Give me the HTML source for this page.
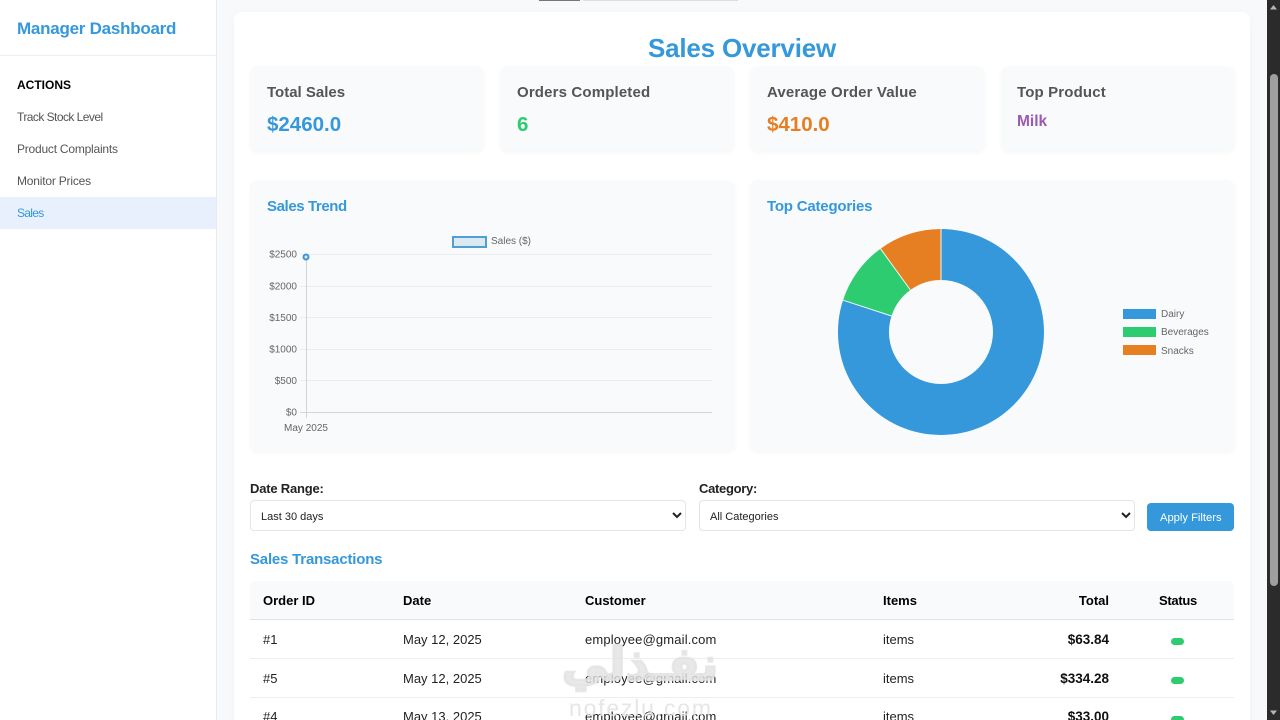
<!DOCTYPE html>
<html><head><meta charset="utf-8"><title>Sales Overview</title>
<style>
html,body{margin:0;padding:0;width:1280px;height:720px;overflow:hidden;background:#f8f9fb;font-family:"Liberation Sans",sans-serif}
*{box-sizing:border-box}
#root{position:absolute;left:0;top:0;width:1280px;height:720px;overflow:hidden;background:#f8f9fb;filter:blur(.3px)}
.t{position:absolute;white-space:nowrap;line-height:20px;height:20px}
.b{position:absolute}
.card{position:absolute;background:#f9fafc;border-radius:8px;box-shadow:0 2px 4px rgba(0,0,0,.04)}
.m{font-size:12px;color:#555}
.ct{font-size:15px;font-weight:bold;color:#555;letter-spacing:.15px}
.v{font-size:20.5px;font-weight:bold}
.h3{font-size:15px;font-weight:bold;color:#3498db}
.th{font-size:13px;font-weight:bold;color:#000}
.td{font-size:13px;color:#222}
.tot{font-size:13.5px;font-weight:bold;color:#111}
.tick{font:10px "Liberation Sans",sans-serif;fill:#666}
.l{font-size:13px;font-weight:bold;color:#222}
select{position:absolute;background:#fff;border:1px solid #e2e4e8;border-radius:4px;font:11px "Liberation Sans",sans-serif;color:#222;padding:2px 6px 0;height:31px;width:436px;top:500px}
.pill{position:absolute;left:1171px;width:13px;height:7px;border-radius:4px;background:#2ecc71}
.line{position:absolute;left:250px;width:984px;height:1px;background:#eceef0}
</style></head><body>
<div id="root">

<div class="b" style="left:0;top:0;width:217px;height:720px;background:#fff;border-right:1px solid #e8eaed"></div>
<div class="b" style="left:0;top:55px;width:216px;height:1px;background:#eceef0"></div>
<div class="t" style="left:17px;top:19px;font-size:17px;letter-spacing:-.25px;font-weight:bold;color:#3498db">Manager Dashboard</div>
<div class="t" style="left:17px;top:75px;font-size:12px;font-weight:bold;color:#000">ACTIONS</div>
<div class="t m" style="left:17px;top:107px;letter-spacing:-.55px">Track Stock Level</div>
<div class="t m" style="left:17px;top:139px;letter-spacing:-.22px">Product Complaints</div>
<div class="t m" style="left:17px;top:171px;letter-spacing:-.2px">Monitor Prices</div>
<div class="b" style="left:0;top:197px;width:216px;height:32px;background:#e8f0fe"></div>
<div class="t m" style="left:17px;top:203px;color:#3498db;letter-spacing:-.7px">Sales</div>

<div class="b" style="left:539px;top:0;width:41px;height:1px;background:#777"></div>
<div class="b" style="left:583px;top:0;width:155px;height:1px;background:#ddd"></div>

<div class="b" style="left:234px;top:12px;width:1016px;height:720px;background:#fff;border-radius:8px;box-shadow:0 2px 8px rgba(0,0,0,.03)"></div>

<div class="t" style="left:648px;top:33px;height:30px;line-height:30px;font-size:26px;letter-spacing:-.2px;font-weight:bold;color:#3498db">Sales Overview</div>

<div class="card" style="left:250px;top:66px;width:234px;height:85px"></div>
<div class="card" style="left:500px;top:66px;width:234px;height:85px"></div>
<div class="card" style="left:750px;top:66px;width:235px;height:85px"></div>
<div class="card" style="left:1001px;top:66px;width:234px;height:85px"></div>

<div class="t ct" style="left:267px;top:83px;letter-spacing:0">Total Sales</div>
<div class="t v" style="left:267px;top:115px;color:#3498db">$2460.0</div>
<div class="t ct" style="left:517px;top:83px">Orders Completed</div>
<div class="t v" style="left:517px;top:115px;color:#2ecc71">6</div>
<div class="t ct" style="left:767px;top:83px">Average Order Value</div>
<div class="t v" style="left:767px;top:115px;color:#e67e22">$410.0</div>
<div class="t ct" style="left:1017px;top:83px">Top Product</div>
<div class="t" style="left:1017px;top:112px;font-size:15.5px;font-weight:bold;color:#9b59b6">Milk</div>

<div class="card" style="left:250px;top:180px;width:485px;height:271px"></div>
<div class="card" style="left:750px;top:180px;width:485px;height:271px"></div>
<div class="t h3" style="left:267px;top:197px;letter-spacing:-.4px">Sales Trend</div>
<div class="t h3" style="left:767px;top:197px;letter-spacing:-.2px">Top Categories</div>

<svg class="b" style="left:250px;top:225px" width="490" height="225" viewBox="250 225 490 225">
  <rect x="453" y="237" width="33" height="10" fill="#dbe9f3" stroke="#4f9fd4" stroke-width="2"/>
  <text class="tick" x="491" y="244">Sales ($)</text>
  <g stroke="#eaecee" stroke-width="1">
    <line x1="300" x2="712" y1="254.5" y2="254.5"/>
    <line x1="300" x2="712" y1="286.5" y2="286.5"/>
    <line x1="300" x2="712" y1="317.5" y2="317.5"/>
    <line x1="300" x2="712" y1="349.5" y2="349.5"/>
    <line x1="300" x2="712" y1="380.5" y2="380.5"/>
  </g>
  <line x1="300" x2="712" y1="412.5" y2="412.5" stroke="#d2d4d8"/>
  <line x1="306.5" x2="306.5" y1="254" y2="418" stroke="#d2d4d8"/>
  <g text-anchor="end">
    <text class="tick" x="297" y="257.5">$2500</text>
    <text class="tick" x="297" y="289.5">$2000</text>
    <text class="tick" x="297" y="321">$1500</text>
    <text class="tick" x="297" y="352.5">$1000</text>
    <text class="tick" x="297" y="384">$500</text>
    <text class="tick" x="297" y="415.5">$0</text>
  </g>
  <text class="tick" x="306" y="431" text-anchor="middle">May 2025</text>
  <circle cx="306" cy="257" r="2.5" fill="#dbe9f3" stroke="#3f97d3" stroke-width="2"/>
</svg>

<svg class="b" style="left:820px;top:220px" width="420" height="230" viewBox="820 220 420 230">
  <path d="M941 229A103 103 0 1 1 843 300.2L891.5 316A52 52 0 1 0 941 280Z" fill="#3498db"/>
  <path d="M843 300.2A103 103 0 0 1 880.5 248.7L910.4 290A52 52 0 0 0 891.5 316Z" fill="#2ecc71"/>
  <path d="M880.5 248.7A103 103 0 0 1 941 229V280A52 52 0 0 0 910.4 290Z" fill="#e67e22"/>
  <g stroke="#f4f6f4" stroke-width="1">
    <line x1="941" y1="229" x2="941" y2="280"/>
    <line x1="880.5" y1="248.7" x2="910.4" y2="290"/>
    <line x1="843" y1="300.2" x2="891.5" y2="316"/>
  </g>
  <rect x="1123" y="309" width="33" height="10" fill="#3498db"/>
  <rect x="1123" y="327" width="33" height="10" fill="#2ecc71"/>
  <rect x="1123" y="345" width="33" height="10" fill="#e67e22"/>
  <text class="tick" x="1161" y="317">Dairy</text>
  <text class="tick" x="1161" y="335">Beverages</text>
  <text class="tick" x="1161" y="354">Snacks</text>
</svg>

<div class="t l" style="left:250px;top:479px;letter-spacing:-.2px">Date Range:</div>
<div class="t l" style="left:699px;top:479px;letter-spacing:-.3px">Category:</div>
<select style="left:250px"><option>Last 30 days</option></select>
<select style="left:699px"><option>All Categories</option></select>
<div class="b" style="left:1147px;top:503px;width:87px;height:28px;background:#3498db;border-radius:4px"></div>
<div class="t" style="left:1160px;top:508px;font-size:11.2px;color:#fff">Apply Filters</div>

<div class="t h3" style="left:250px;top:550px;letter-spacing:-.2px">Sales Transactions</div>

<div class="b" style="left:250px;top:581px;width:984px;height:39px;background:#f9fafc;border-bottom:1px solid #dfe1e4;border-radius:6px 6px 0 0"></div>
<div class="t th" style="left:263px;top:591px">Order ID</div>
<div class="t th" style="left:403px;top:591px">Date</div>
<div class="t th" style="left:585px;top:591px">Customer</div>
<div class="t th" style="left:883px;top:591px">Items</div>
<div class="t th" style="right:171px;top:591px">Total</div>
<div class="t th" style="left:1159px;top:591px;letter-spacing:-.3px">Status</div>

<div class="t td" style="left:263px;top:630px">#1</div>
<div class="t td" style="left:403px;top:630px">May 12, 2025</div>
<div class="t td" style="left:585px;top:630px;letter-spacing:.15px">employee@gmail.com</div>
<div class="t td" style="left:883px;top:630px">items</div>
<div class="t tot" style="right:171px;top:630px">$63.84</div>
<div class="pill" style="top:638px"></div>
<div class="line" style="top:658px"></div>

<div class="t td" style="left:263px;top:669px">#5</div>
<div class="t td" style="left:403px;top:669px">May 12, 2025</div>
<div class="t td" style="left:585px;top:669px;letter-spacing:.15px">employee@gmail.com</div>
<div class="t td" style="left:883px;top:669px">items</div>
<div class="t tot" style="right:171px;top:669px">$334.28</div>
<div class="pill" style="top:677px"></div>
<div class="line" style="top:697px"></div>

<div class="t td" style="left:263px;top:707px">#4</div>
<div class="t td" style="left:403px;top:707px">May 13, 2025</div>
<div class="t td" style="left:585px;top:707px;letter-spacing:.15px">employee@gmail.com</div>
<div class="t td" style="left:883px;top:707px">items</div>
<div class="t tot" style="right:171px;top:707px">$33.00</div>
<div class="pill" style="top:716px"></div>

<div class="t" style="left:553px;top:638px;width:174px;height:52px;line-height:52px;font-family:'DejaVu Sans',sans-serif;font-size:46px;font-weight:bold;color:rgba(226,226,226,.8);-webkit-text-stroke:2.5px rgba(226,226,226,.8);text-align:center" dir="rtl">نفـذلي</div>
<div class="t" style="left:569px;top:695px;height:26px;line-height:26px;font-size:23px;letter-spacing:1.8px;color:rgba(226,226,226,.85)">nofezlu.com</div>

<div class="b" style="left:1267px;top:0;width:13px;height:720px;background:#2b2b2b"></div>
<div class="b" style="left:1270px;top:74px;width:8px;height:512px;background:#9f9f9f;border-radius:4px"></div>
<svg class="b" style="left:1267px;top:0" width="13" height="720">
  <path d="M6.5 5L10 9.5H3Z" fill="#b5b5b5"/>
  <path d="M6.5 715L10 710.5H3Z" fill="#b5b5b5"/>
</svg>
</div>
</body></html>
